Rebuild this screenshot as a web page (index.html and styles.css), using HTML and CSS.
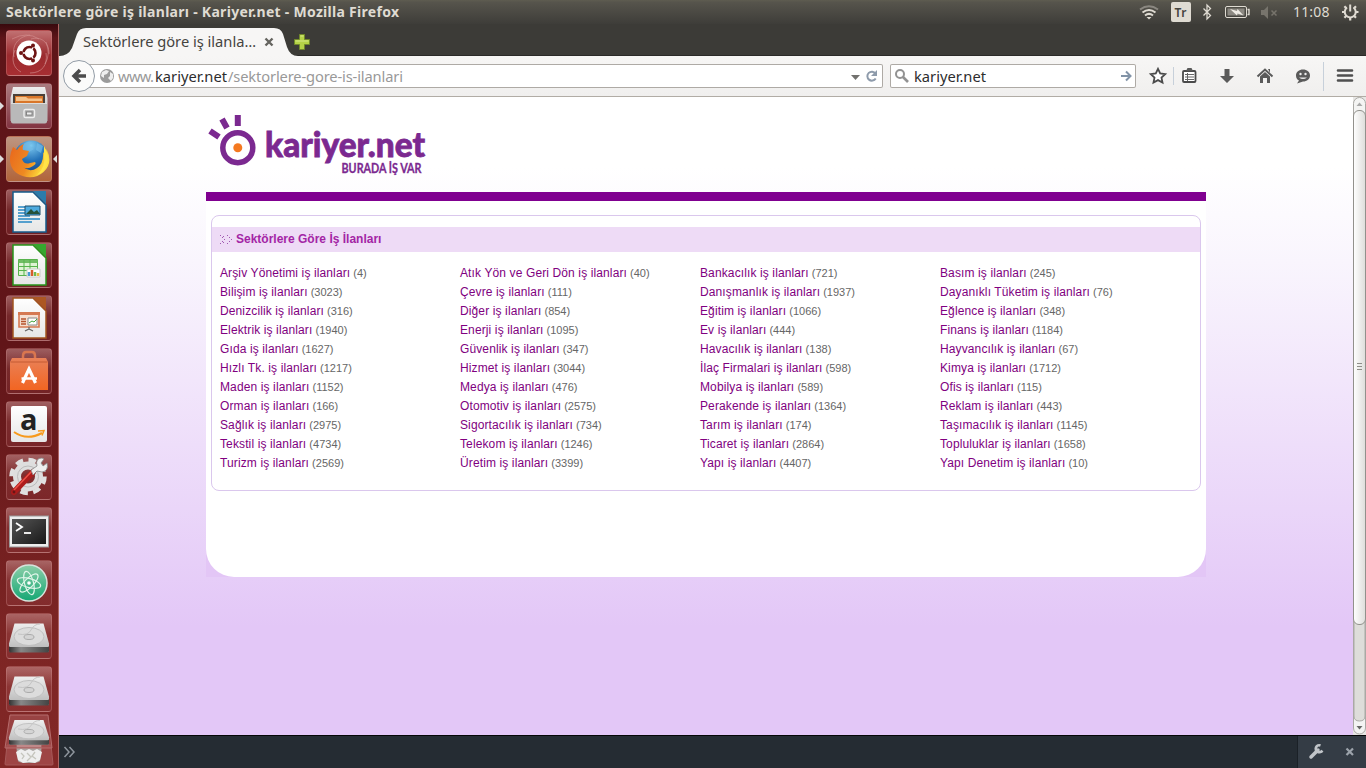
FILE: index.html
```html
<!DOCTYPE html>
<html lang="tr">
<head>
<meta charset="utf-8">
<title>Sektörlere göre iş ilanları - Kariyer.net</title>
<link rel="stylesheet" href="styles.css">
</head>
<body>
<svg class="defs" width="0" height="0">
  <defs>
    <linearGradient id="paper" x2="0" y2="1"><stop stop-color="#fff"/><stop offset="1" stop-color="#e6e6e6"/></linearGradient>
    <linearGradient id="metal" x2="0" y2="1"><stop stop-color="#eee"/><stop offset="1" stop-color="#b5b5b5"/></linearGradient>
    <linearGradient id="dark" x2="1" y2="1"><stop stop-color="#555"/><stop offset="1" stop-color="#181818"/></linearGradient>
    <linearGradient id="edge"><stop stop-color="#333"/><stop offset=".3" stop-color="#888"/><stop offset="1" stop-color="#444"/></linearGradient>
    <linearGradient id="bag" x2="0" y2="1"><stop stop-color="#e98158"/><stop offset="1" stop-color="#f26522"/></linearGradient>
    <radialGradient id="globe" cx=".5" cy=".15" r=".9"><stop stop-color="#7cc8ef"/><stop offset=".5" stop-color="#2472b8"/><stop offset="1" stop-color="#123a7c"/></radialGradient>
    <linearGradient id="fox" x2="1" y2=".4"><stop stop-color="#e8651d"/><stop offset=".6" stop-color="#ee8a22"/><stop offset="1" stop-color="#ffdf3c"/></linearGradient>
    <linearGradient id="atom" x2="0" y2="1"><stop stop-color="#8ccfa9"/><stop offset="1" stop-color="#15a774"/></linearGradient>
    <g id="disk">
      <path d="M8.500 10.500h29l5.500 20v7.500q0 1-1 1H4q-1 0-1-1v-7.500z" fill="url(#metal)"/>
      <path d="M3 33q0 1 1.500 1h37q1.500 0 1.500-1v5q0 1.500-1.500 1.500h-37Q3 39.500 3 38z" fill="url(#edge)"/>
      <ellipse cx="23" cy="23.500" rx="15" ry="9" fill="#dcdcdc" stroke="#c0c0c0"/>
      <path d="M12 21q10 2 13-4t9-6" fill="none" stroke="#c4c4c4"/>
      <ellipse cx="23" cy="24" rx="5" ry="2.500" fill="#d4d4d4" stroke="#aaa"/>
    </g>
  </defs>
</svg>
<div class="desktop">
  <header class="menubar">
    <svg width="420" height="24"><text x="6" y="17" textLength="393" class="title">Sektörlere göre iş ilanları - Kariyer.net - Mozilla Firefox</text></svg>
    <svg width="240" height="24" viewBox="1126 0 240 24" fill="none" stroke="#dfdbd2">
      <path d="M1140 9.500q9-6.500 18 0" stroke="#8a8780" stroke-width="2"/>
      <path d="M1142.500 12.500q6.500-5 13 0M1145 15.500q4-3.200 8 0" stroke-width="2"/>
      <path d="M1146.500 17h5l-2.500 2.500z" fill="#dfdbd2" stroke="none"/>
      <rect x="1171" y="2" width="20" height="20" rx="2" fill="#dfdbd2" stroke="none"/>
      <text x="1174.500" y="17" class="kbd" textLength="12">Tr</text>
      <path d="M1203.500 8.500l7 7-3.500 3.500V5l3.500 3.500-7 7" stroke-width="1.300"/>
      <rect x="1225.500" y="6.500" width="21" height="11" rx="1.500"/>
      <rect x="1227.500" y="8.500" width="17" height="7" fill="#8c8982" stroke="none"/>
      <path d="M1247.500 9.500h1.500v5h-1.500" stroke-width="1.400"/>
      <path d="M1230 9l7 2 .5-2 6 6.500-6-2-.5 2z" fill="#eeebe4" stroke="none"/>
      <path d="M1261 10h3l4-4v13l-4-4h-3z" fill="#77746c" stroke="none"/>
      <path d="M1271.500 10.500l5 5m0-5l-5 5" stroke="#77746c" stroke-width="1.500"/>
      <text x="1293" y="17" class="clock" textLength="36.500">11:08</text>
      <path d="M1347 7.500a5.500 5.500 0 1 0 6.500 0M1350.200 4.500v7" stroke-width="2"/>
      <path d="M1342 12h2.500m11.500 0h2.500M1344.400 6.200l2 2m7.600 0l2-2M1344.400 17.800l2-2m7.600 0l2 2M1350.200 18v2.500" stroke-width="2.200"/>
    </svg>
  </header>

  <nav class="launcher">
    <div class="tile ubuntu"><svg viewBox="0 0 46 46"><path d="M8 27C5 12 16 6 24 5M15 42C7 38 5 29 9 20M24 43c12 0 18-8 16-20M43 24C43 12 35 6 25 9M6 9q15-8 27 0M40 12q5 12-1 22" fill="none" stroke="#d28e8e" stroke-width="1" opacity=".65"/><circle cx="23" cy="23" r="12.500" fill="#fff"/><circle cx="23.500" cy="23" r="6" fill="none" stroke="#6d1414" stroke-width="2.600"/><path d="M20 23h-7m12-2l4-7m-4 11l4 7" stroke="#fff" stroke-width="1.400"/><g fill="#6d1414"><circle cx="15" cy="23" r="2"/><circle cx="27" cy="15.500" r="2"/><circle cx="27" cy="30.500" r="2"/></g></svg></div>
    <div class="tile files open"><svg viewBox="0 0 46 46"><path d="M7 4h32l2.500 11v23H4.500V15z" fill="url(#metal)"/><path d="M7 11h32v9H7z" fill="#4a4038"/><path d="M9 13h28v7H9z" fill="#d8762a"/><path d="M10 14h10l2 1.500h14V18H10z" fill="#f4c28b"/><path d="M5 20h36v18.500q0 2-2 2H7q-2 0-2-2z" fill="#b9b9b9"/><path d="M5 20.500h36" stroke="#ddd"/><rect x="18" y="26.500" width="10.500" height="8" rx="1.500" fill="#aaa" stroke="#eee" stroke-width="1.400"/><rect x="20.500" y="29" width="5.500" height="3" fill="#eee" stroke="#777" stroke-width=".8"/></svg></div>
    <div class="tile firefox open active"><svg viewBox="0 0 46 46"><circle cx="25" cy="21.500" r="17" fill="url(#globe)"/><path d="M16 9q6-5 10-3l-3 4 5 3-5 3-7-2M31 7l6 3-2 7-5-3z" fill="#75bde8" opacity=".65"/><path d="M7 11q2 1 4 3 3-5 7-6-2 3-1 6l6 1-2 5-5 3q2 6 8 4l5-1q2 2-2 4-6 4-10 1 7 6 14 1 7-5 6-16l3 4 .5-7q7 14-3 23-9 8-21 4Q3 35 4 21q1-6 3-10z" fill="url(#fox)"/><path d="M38 10q7 10 2 21-3 6-9 8 9-8 7-19z" fill="#ffe34a"/></svg></div>
    <div class="tile"><svg viewBox="0 0 46 46"><path d="M7 3h20l13 13v27H7z" fill="url(#paper)" stroke="#155b8b" stroke-width="1.500"/><path d="M27 2h13v13z" fill="#2b7cab"/><path d="M12 18h12m-12 3h12m-12 3h12m-12 3h12m-12 3h22m-22 3h14" stroke="#2486c4" stroke-width="1.600"/><path d="M19 17h15v9H19z" fill="#4daade" stroke="#1c4c6a"/><path d="M20 25l5-5 3 3 3-2 3 4z" fill="#24513a"/></svg></div>
    <div class="tile"><svg viewBox="0 0 46 46"><path d="M7 3h20l13 13v27H7z" fill="url(#paper)" stroke="#28951b" stroke-width="1.500"/><path d="M27 2h13v13z" fill="#35a82e"/><path d="M12.500 17.500h19v16h-19z" fill="#def3d3" stroke="#57b34c"/><path d="M12.500 18h19v3h-19z" fill="#70bd64"/><path d="M12 24.500h20m-20 4h20M18 17v17m6-17v17" stroke="#57b34c"/><path d="M21 27h13v8H21z" fill="#fff" stroke="#ccc"/><path d="M23 34v-4" stroke="#4a9bd2" stroke-width="2.500"/><path d="M26 34v-6" stroke="#d85c2b" stroke-width="2.500"/><path d="M29 34v-4" stroke="#71b94d" stroke-width="2.500"/><path d="M32 34v-3" stroke="#e6bb3c" stroke-width="2.500"/></svg></div>
    <div class="tile"><svg viewBox="0 0 46 46"><path d="M7 3h20l13 13v27H7z" fill="url(#paper)" stroke="#a1541f" stroke-width="1.500"/><path d="M27 2h13v13z" fill="#ac5723"/><path d="M13 18h20v14H13z" fill="#f6dfd1" stroke="#d57952" stroke-width="1.600"/><path d="M12 18.500h22" stroke="#d57952" stroke-width="3"/><path d="M15 24h5m-5 2.500h5m-5 2.500h5" stroke="#b5532d" stroke-width="1.300"/><path d="M22 23h9v7h-9z" fill="#fff" stroke="#888"/><path d="M23 28l3-2 2 1 3-3" fill="none" stroke="#42a33b"/><path d="M23 32v2m-4 2l4-2 4 2" fill="none" stroke="#666" stroke-width="1.300"/></svg></div>
    <div class="tile"><svg viewBox="0 0 46 46"><path d="M17 15V8q0-4 3-4h6q3 0 3 4v7" fill="none" stroke="#d9764f" stroke-width="2.500"/><path d="M6 10h34l2 4v28H4V14z" fill="url(#bag)"/><path d="M4.500 14h37" stroke="#c45b33"/><path d="M16.500 35l6.500-14 6.500 14" fill="none" stroke="#fff" stroke-width="3.200"/><path d="M15.500 30.500h15.500" stroke="#fff" stroke-width="2.500"/></svg></div>
    <div class="tile"><svg viewBox="0 0 46 46"><rect x="5" y="5" width="36" height="36" rx="2" fill="url(#paper)"/><text x="14" y="29" class="amazon">a</text><path d="M8 31q13 9 28 1" fill="none" stroke="#f79a1c" stroke-width="2"/><path d="M32 30l6-.5-2 5" fill="none" stroke="#f79a1c" stroke-width="1.500"/></svg></div>
    <div class="tile"><svg viewBox="0 0 46 46"><circle cx="22" cy="22.500" r="16.500" fill="none" stroke="#e0e0e0" stroke-width="4.500" stroke-dasharray="7.500 5.460"/><circle cx="22" cy="22.500" r="11" fill="none" stroke="#dedede" stroke-width="8"/><circle cx="22" cy="22.500" r="10.500" fill="none" stroke="#bbb"/><path d="M8 38l19-20" stroke="#ad1c1c" stroke-width="6" stroke-linecap="round"/><path d="M8 36l18-19" stroke="#eb5147" stroke-width="1.500"/><circle cx="8" cy="38" r="1.400" fill="#681515"/><path d="M25 16l6-4q-2-8 5-8l2 1-3 4 2 3 4-3q2 8-5 9l-5-1-4 4z" fill="#eee" stroke="#888" stroke-width=".8"/></svg></div>
    <div class="tile"><svg viewBox="0 0 46 46"><rect x="3.500" y="9" width="39" height="31" fill="#ededed" stroke="#999"/><rect x="6" y="12" width="34" height="25" fill="url(#dark)"/><path d="M10 16l6 4-6 4" fill="none" stroke="#fff" stroke-width="1.800"/><path d="M18 26h7" stroke="#fff" stroke-width="1.800"/></svg></div>
    <div class="tile"><svg viewBox="0 0 46 46"><circle cx="23" cy="23" r="18" fill="url(#atom)" stroke="#d7e3dc" stroke-width="1.500"/><g fill="none" stroke="#e0f5e9" stroke-width="1.200"><ellipse cx="23" cy="23" rx="12" ry="4.500" transform="rotate(15 23 23)"/><ellipse cx="23" cy="23" rx="12" ry="4.500" transform="rotate(75 23 23)"/><ellipse cx="23" cy="23" rx="12" ry="4.500" transform="rotate(135 23 23)"/></g><circle cx="23" cy="23" r="1.800" fill="#fff"/></svg></div>
    <div class="tile"><svg viewBox="0 0 46 46"><use href="#disk"/></svg></div>
    <div class="tile"><svg viewBox="0 0 46 46"><use href="#disk"/></svg></div>
    <svg class="folded" width="50" height="54" viewBox="4 714 50 54">
      <path d="M7 745h44l2 19q0 1-1 1H6q-1 0-1-1z" fill="#9e4545" stroke="#a65959"/>
      <path d="M16 744h26l-2 17q-1 2-11 2t-11-2z" fill="#a9a3a0"/><path d="M17 746h24" stroke="#eee" stroke-width="2"/>
      <path d="M16 752l5-3 4 2 4-2 4 2 4-2 5 3-2 8-5 3-6-1-6 1-5-3z" fill="#eee"/><path d="M21 753l3 3-2 3m5-6l4 4-4 4m8-9l-3 4 4 3" fill="none" stroke="#c5c5bd" stroke-width="1.300"/>
      <path d="M10 715h38l4 33H5z" fill="#a65353" fill-opacity=".65" stroke="#b66c6c"/>
      <svg x="6" y="711" width="46" height="36" viewBox="0 0 46 42" preserveAspectRatio="none"><use href="#disk"/></svg>
    </svg>
  </nav>

  <main class="browser">
    <div class="tabs">
      <svg width="260" height="32" viewBox="59 24 260 32">
        <path d="M59 56q9 0 13-8l5-14q2-6 9-6h188q7 0 9 6l4 13q3 9 11 9z" fill="#f7f6f5"/>
        <text x="83" y="47" class="tabtext" textLength="173">Sektörlere göre iş ilanla…</text>
        <path d="M265.500 38.500l7 7m0-7l-7 7" stroke="#65645f" stroke-width="2.400"/>
        <path d="M299.500 34.500h5v5h5v5h-5v5h-5v-5h-5v-5h5z" fill="#b5d347" stroke="#71882a"/>
        <path d="M300.500 36h3m-8 5h13" stroke="#d6e889"/>
      </svg>
    </div>
    <div class="toolbar">
      <div class="address">
        <svg width="345" height="24" viewBox="95 64 345 24">
          <circle cx="107" cy="76" r="7" fill="#9b9b9b"/><path d="M102 72l4-2 3 1-2 3-3 1v3l-3-2zm8 0l3 2v4l-2 3-3-3 2-2z" fill="#eee"/>
          <text x="118" y="82" class="url" textLength="36">www.</text><text x="155" y="82" class="host" textLength="72">kariyer.net</text><text x="228" y="82" class="url" textLength="175">/sektorlere-gore-is-ilanlari</text>
        </svg>
        <svg width="35" height="24" viewBox="848 64 35 24"><path d="M851 75h9l-4.500 5z" fill="#72716e"/><path d="M875.500 73.500a4.500 4.500 0 1 0 .2 5" fill="none" stroke="#8e9bab" stroke-width="2"/><path d="M877 70v6h-6z" fill="#8e9bab"/></svg>
      </div>
      <div class="search">
        <svg width="246" height="24" viewBox="890 64 246 24"><circle cx="900" cy="74" r="4" fill="none" stroke="#929292" stroke-width="2"/><path d="M903 77l5 5" stroke="#929292" stroke-width="2.600"/><text x="914" y="82" class="host" textLength="72">kariyer.net</text><path d="M1121 76h9m-4-4.500l4.500 4.500-4.500 4.500" fill="none" stroke="#8293a7" stroke-width="2"/></svg>
      </div>
      <svg width="222" height="40" viewBox="1144 56 222 40" fill="#5a5a5a">
        <path d="M1158 68.800l2.200 4.700 5 .6-3.700 3.500 1 5-4.500-2.500-4.500 2.500 1-5-3.700-3.500 5-.6z" fill="#fff" stroke="#4b4b4b" stroke-width="1.800"/>
        <path d="M1173.500 67v18M1323.500 62v29" stroke="#c7d0da"/>
        <rect x="1183" y="71" width="12.500" height="11" rx="1" fill="#fff" stroke="#4b4b4b" stroke-width="1.800"/><path d="M1186 71l1.500-3h4l1.500 3z"/><path d="M1185 74.500h9m-9 2.500h9m-9 2.500h9M1187.500 73v8" stroke="#666"/>
        <path d="M1224.500 69h5v7h4.500l-7 7-7-7h4.500z"/>
        <path d="M1257.500 76.500l7.500-7 7.500 7" fill="none" stroke="#5a5a5a" stroke-width="2"/><path d="M1265 72l5 4.500V83h-3v-5h-4v5h-3v-6.500zM1268 69h2v4z"/>
        <path d="M1303 69.500c4 0 7 2.500 7 6s-3 6-7 6l-6 2 2-3q-3-1.500-3-5c0-3.500 3-6 7-6z"/><circle cx="1300.500" cy="74" r="1.200" fill="#eee"/><circle cx="1305.500" cy="74" r="1.200" fill="#eee"/><path d="M1299 77.500q4 3 8 0z" fill="#eee"/>
        <path d="M1338 70.500h14m-14 5h14m-14 5h14" stroke="#4f4f4f" stroke-width="2.600" stroke-linecap="round"/>
      </svg>
      <svg class="back" viewBox="62 59 34 34"><circle cx="79" cy="76" r="15.500" fill="#fbfbfa" stroke="#929ca6"/><path d="M86 76H75m5-6l-6 6 6 6" fill="none" stroke="#4c4c4c" stroke-width="3.500"/></svg>
    </div>
    <div class="viewport">
      <div class="page">
        <div class="container">
          <div class="brand">
            <svg width="240" height="95" viewBox="206 97 240 95">
              <circle cx="237.800" cy="147.700" r="15" fill="none" stroke="#7b2990" stroke-width="5.500"/><circle cx="237.800" cy="147.700" r="4.500" fill="#f47920"/>
              <path d="M237.800 115v11M222 119l5 9M210 131l9 6" stroke="#7b2990" stroke-width="6"/>
              <text x="265" y="157" class="logo" textLength="160" lengthAdjust="spacingAndGlyphs">kariyer.net</text>
              <text x="341.500" y="173" class="slogan" textLength="80" lengthAdjust="spacingAndGlyphs">BURADA İŞ VAR</text>
            </svg>
          </div>
          <div class="corners"><section class="sheet">
            <div class="box">
              <h1><svg width="16" height="10" fill="#a25ab2"><path d="M0 0h1v1H0zM2 2h1v1H2zM4 4h1v1H4zM2 6h1v1H2zM0 8h1v1H0zM3 1h1v1H3zM3 7h1v1H3zM7 0h1v1H7zM9 2h1v1H9zM11 4h1v1h-1zM9 6h1v1H9zM7 8h1v1H7z"/></svg>Sektörlere Göre İş İlanları</h1>
              <ul class="sectors">
<li><a>Arşiv Yönetimi iş ilanları</a> (4)</li><li><a>Atık Yön ve Geri Dön iş ilanları</a> (40)</li><li><a>Bankacılık iş ilanları</a> (721)</li><li><a>Basım iş ilanları</a> (245)</li>
<li><a>Bilişim iş ilanları</a> (3023)</li><li><a>Çevre iş ilanları</a> (111)</li><li><a>Danışmanlık iş ilanları</a> (1937)</li><li><a>Dayanıklı Tüketim iş ilanları</a> (76)</li>
<li><a>Denizcilik iş ilanları</a> (316)</li><li><a>Diğer iş ilanları</a> (854)</li><li><a>Eğitim iş ilanları</a> (1066)</li><li><a>Eğlence iş ilanları</a> (348)</li>
<li><a>Elektrik iş ilanları</a> (1940)</li><li><a>Enerji iş ilanları</a> (1095)</li><li><a>Ev iş ilanları</a> (444)</li><li><a>Finans iş ilanları</a> (1184)</li>
<li><a>Gıda iş ilanları</a> (1627)</li><li><a>Güvenlik iş ilanları</a> (347)</li><li><a>Havacılık iş ilanları</a> (138)</li><li><a>Hayvancılık iş ilanları</a> (67)</li>
<li><a>Hızlı Tk. iş ilanları</a> (1217)</li><li><a>Hizmet iş ilanları</a> (3044)</li><li><a>İlaç Firmalari iş ilanları</a> (598)</li><li><a>Kimya iş ilanları</a> (1712)</li>
<li><a>Maden iş ilanları</a> (1152)</li><li><a>Medya iş ilanları</a> (476)</li><li><a>Mobilya iş ilanları</a> (589)</li><li><a>Ofis iş ilanları</a> (115)</li>
<li><a>Orman iş ilanları</a> (166)</li><li><a>Otomotiv iş ilanları</a> (2575)</li><li><a>Perakende iş ilanları</a> (1364)</li><li><a>Reklam iş ilanları</a> (443)</li>
<li><a>Sağlık iş ilanları</a> (2975)</li><li><a>Sigortacılık iş ilanları</a> (734)</li><li><a>Tarım iş ilanları</a> (174)</li><li><a>Taşımacılık iş ilanları</a> (1145)</li>
<li><a>Tekstil iş ilanları</a> (4734)</li><li><a>Telekom iş ilanları</a> (1246)</li><li><a>Ticaret iş ilanları</a> (2864)</li><li><a>Topluluklar iş ilanları</a> (1658)</li>
<li><a>Turizm iş ilanları</a> (2569)</li><li><a>Üretim iş ilanları</a> (3399)</li><li><a>Yapı iş ilanları</a> (4407)</li><li><a>Yapı Denetim iş ilanları</a> (10)</li>
              </ul>
            </div>
          </section></div>
        </div>
      </div>
      <div class="scrollbar">
        <svg width="13" height="638" viewBox="1353 97 13 638">
          <defs><linearGradient id="thumb"><stop stop-color="#fff"/><stop offset="1" stop-color="#deddda"/></linearGradient></defs>
          <rect x="1353.500" y="97.500" width="12" height="636.500" rx="6" fill="#f4f4f3" stroke="#aaa9a5"/>
          <path d="M1354 600h11v116q0 5-5.500 5t-5.500-5z" fill="#deddda" stroke="#aaa9a5"/>
          <rect x="1353.500" y="110.500" width="12" height="514" rx="5.500" fill="url(#thumb)" stroke="#92918c"/>
          <path d="M1356.500 106h6l-3-3.500z" fill="#aaa"/><path d="M1356.500 726h6l-3 3.500z" fill="#666"/>
          <path d="M1357 363.500h5m-5 3h5m-5 3h5" stroke="#8f8e89"/>
        </svg>
      </div>
    </div>
    <footer class="devbar">
      <svg width="30" height="32" viewBox="59 736 30 32"><path d="M64.500 747l4.500 5-4.500 5m5-10l4.500 5-4.500 5" fill="none" stroke="#8e959d" stroke-width="1.500"/></svg>
      <div class="devtools"><svg width="68" height="32" viewBox="1298 736 68 32"><path d="M1311 757l7-7" stroke="#c1c5c9" stroke-width="3.500" stroke-linecap="round"/><path d="M1320.500 745.500a3.500 3.500 0 1 0 1.800 5" fill="none" stroke="#c1c5c9" stroke-width="2.600"/><path d="M1346.500 748.500l6.500 6.500m0-6.500l-6.500 6.500" stroke="#9ca3ab" stroke-width="2.200"/></svg></div>
    </footer>
  </main>
</div>
</body>
</html>
```
FILE: styles.css
```css
* { box-sizing: border-box; }
body { margin: 0; width: 1366px; height: 768px; overflow: hidden; font-family: "Liberation Sans", Arial, sans-serif; }
svg { display: block; flex: none; }
.defs { position: absolute; }
.desktop { display: grid; grid-template: 24px 744px / 59px 1307px; }
.menubar { grid-column: 1 / 3; display: flex; justify-content: space-between; background: linear-gradient(#5e5c50, #56544c 10%, #3e3d39); }
.title, .kbd, .clock, .tabtext, .url, .host { font-family: "Noto Sans", "Open Sans", sans-serif; font-size: 14.7px; stroke: none; }
.title { font-weight: 700; font-size: 14px; fill: #dfdbd2; }
.kbd { font-size: 12px; font-weight: 600; fill: #45443f; }
.clock { font-size: 14px; fill: #dfdbd2; }
.tabtext { fill: #45443f; }
.url { fill: #999; }
.host { fill: #2d2d2d; }

.launcher { display: flex; flex-direction: column; align-items: flex-start; gap: 7px; padding: 6px 0 0 6px; overflow: hidden; border-right: 1px solid #ad6562; background: linear-gradient(#38090d, #5e1519 14px, #611518 320px, #7d2524 620px, #822726); }
.tile { position: relative; flex: none; width: 46px; height: 46px; border: 1px solid rgba(210, 145, 145, .32); border-radius: 4px; background: linear-gradient(rgba(225, 175, 175, .48), rgba(180, 100, 100, .25) 45%, rgba(160, 70, 75, .25)); }
.tile svg { width: 46px; height: 46px; margin: -1px; }
.amazon { font-family: "Open Sans", sans-serif; font-weight: 700; font-size: 29px; fill: #222; }
.ubuntu { background: linear-gradient(#c17172, #9b2b2f 55%, #a72e32); }
.files { background: linear-gradient(#aa7c80, #823441); }
.firefox { background: linear-gradient(#bd9682, #b1643a); }
.open::before { content: ""; position: absolute; left: -7px; top: 18px; border: 4px solid transparent; border-left-color: #ddd; border-right: 0; }
.active::after { content: ""; position: absolute; right: -6px; top: 18px; border: 4px solid transparent; border-right: 4px solid #ddd; border-left: 0; }
.folded { margin: -5px 0 0 -2px; }

.browser { display: grid; grid-template-rows: 32px 41px 638px 33px; }
.tabs { background: #3c3b37; box-shadow: inset 0 -1px #2b2a28; }
.toolbar { position: relative; display: flex; align-items: center; padding: 0 0 1px 27px; border-bottom: 1px solid #b1aca5; background: linear-gradient(#f7f6f5, #f0efee); }
.address, .search { display: flex; justify-content: space-between; height: 24px; border-radius: 2px; background: #fff; box-shadow: inset 0 0 0 1px #aeaaa5; }
.address { width: 797px; padding-left: 9px; margin-right: 7px; }
.search { width: 246px; margin-right: 8px; }
.back { position: absolute; left: 3px; top: 3px; width: 34px; height: 34px; }

.viewport { display: flex; }
.page { width: 1294px; background: linear-gradient(#fff 70px, #f9f5fd 165px, #e3c7f7 530px); }
.container { width: 1000px; margin: 0 auto; }
.brand { height: 95px; }
.logo { font-family: Lato, "Liberation Sans", sans-serif; font-weight: 900; font-size: 35px; fill: #7b2990; stroke: #7b2990; stroke-width: .8px; }
.slogan { font-family: Lato, "Liberation Sans", sans-serif; font-weight: 700; font-size: 13px; fill: #7b2990; stroke: #7b2990; stroke-width: .3px; }
.corners { background: linear-gradient(transparent 340px, #e3c6f6 340px); }
.sheet { height: 385px; padding: 14px 5px 0; border-top: 9px solid #800090; border-radius: 0 0 28px 28px / 0 0 28px 28px; background: #fff; }
.box { height: 276px; padding-top: 11px; border: 1px solid #dac7ed; border-radius: 8px; }
h1 { display: flex; align-items: center; height: 25px; margin: 0; padding: 0 0 2px 8px; background: #eedbf6; color: #a325a5; font-size: 12px; font-weight: 700; }
h1 svg { margin-top: 3px; }
.sectors { display: grid; grid-template-columns: repeat(4, 240px); grid-auto-rows: 19px; margin: 12px 0 0; padding: 0 0 0 8px; list-style: none; color: #666; font-size: 11px; line-height: 19px; white-space: nowrap; }
.sectors a { color: #800080; font-size: 12px; letter-spacing: .12px; }
.scrollbar { width: 13px; background: #e8e7e5; }
.devbar { display: flex; justify-content: space-between; border-top: 1px solid #050607; background: #252c33; }
.devtools { border-left: 1px solid #1b2127; background: #343c45; }
```
